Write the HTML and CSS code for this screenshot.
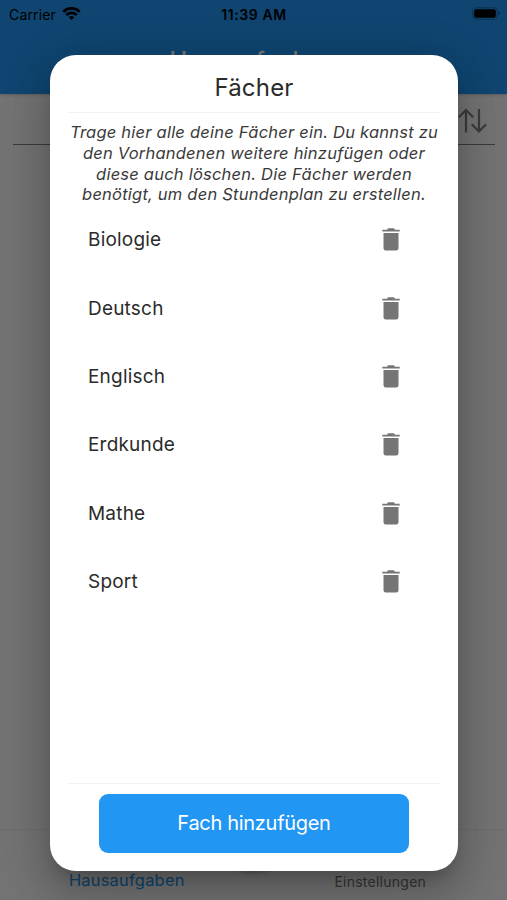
FILE: index.html
```html
<!DOCTYPE html>
<html lang="de">
<head>
<meta charset="utf-8">
<title>Hausaufgaben</title>
<link rel="stylesheet" href="styles.css">
</head>
<body>
<div class="screen">
  <header class="appbar">
    <div class="status">
      <div class="carrier">
        <span>Carrier</span>
        <svg width="19" height="14" viewBox="0 0 19 14" fill="none" stroke="#000" stroke-width="2.7"><path d="M1.3 4.7a11.6 11.6 0 0 1 16.4 0"/><path d="M4.2 8a7.5 7.5 0 0 1 10.6 0"/><path d="M9.5 13.1 6.7 10.3a4 4 0 0 1 5.6 0z" fill="#000" stroke="none"/></svg>
      </div>
      <span class="time">11:39 AM</span>
      <svg class="battery" width="28" height="14" viewBox="0 0 28 14"><rect x=".7" y=".8" width="24.6" height="11.5" rx="3.5" fill="none" stroke="#000" stroke-opacity=".3"/><rect x="2.2" y="2.3" width="21.6" height="8.5" rx="2" fill="#000"/><path d="M26.5 4.6q1.4.5 1.4 2t-1.4 2z" fill="#000" fill-opacity=".4"/></svg>
    </div>
    <h1 class="page-title">Hausaufgaben</h1>
  </header>
  <main class="content">
    <div class="filter">
      <svg width="29" height="26" viewBox="0 0 29 26" fill="none" stroke="#808080" stroke-width="2.2"><path d="M8 24.5V2M.8 9.2 8 2l7.2 7.2M21 1v22.5M13.8 16.3l7.2 7.2 7.2-7.2"/></svg>
    </div>
  </main>
  <nav class="tabs">
    <span class="tab tab-active">Hausaufgaben</span>
    <span class="tab">Einstellungen</span>
    <span class="fab"></span>
  </nav>
</div>
<div class="scrim">
  <section class="dialog">
    <h2 class="dialog-title">Fächer</h2>
    <p class="intro">Trage hier alle deine Fächer ein. Du kannst zu<br>den Vorhandenen weitere hinzufügen oder<br>diese auch löschen. Die Fächer werden<br>benötigt, um den Stundenplan zu erstellen.</p>
    <ul class="subjects">
      <li><span>Biologie</span><svg class="trash" viewBox="0 0 18 23"><path d="M.3 1.7h4.8L6 .3h6l.9 1.4h4.8v1.8H.3zM1.5 5h15v15.2a2.4 2.4 0 0 1-2.4 2.4H3.9a2.4 2.4 0 0 1-2.4-2.4z"/></svg></li>
      <li><span>Deutsch</span><svg class="trash" viewBox="0 0 18 23"><path d="M.3 1.7h4.8L6 .3h6l.9 1.4h4.8v1.8H.3zM1.5 5h15v15.2a2.4 2.4 0 0 1-2.4 2.4H3.9a2.4 2.4 0 0 1-2.4-2.4z"/></svg></li>
      <li><span>Englisch</span><svg class="trash" viewBox="0 0 18 23"><path d="M.3 1.7h4.8L6 .3h6l.9 1.4h4.8v1.8H.3zM1.5 5h15v15.2a2.4 2.4 0 0 1-2.4 2.4H3.9a2.4 2.4 0 0 1-2.4-2.4z"/></svg></li>
      <li><span>Erdkunde</span><svg class="trash" viewBox="0 0 18 23"><path d="M.3 1.7h4.8L6 .3h6l.9 1.4h4.8v1.8H.3zM1.5 5h15v15.2a2.4 2.4 0 0 1-2.4 2.4H3.9a2.4 2.4 0 0 1-2.4-2.4z"/></svg></li>
      <li><span>Mathe</span><svg class="trash" viewBox="0 0 18 23"><path d="M.3 1.7h4.8L6 .3h6l.9 1.4h4.8v1.8H.3zM1.5 5h15v15.2a2.4 2.4 0 0 1-2.4 2.4H3.9a2.4 2.4 0 0 1-2.4-2.4z"/></svg></li>
      <li><span>Sport</span><svg class="trash" viewBox="0 0 18 23"><path d="M.3 1.7h4.8L6 .3h6l.9 1.4h4.8v1.8H.3zM1.5 5h15v15.2a2.4 2.4 0 0 1-2.4 2.4H3.9a2.4 2.4 0 0 1-2.4-2.4z"/></svg></li>
    </ul>
    <div class="actions"><button class="add">Fach hinzufügen</button></div>
  </section>
</div>
</body>
</html>
```

FILE: styles.css
```css
* { box-sizing: border-box; }
body {
  margin: 0;
  font-family: Inter, "Liberation Sans", sans-serif;
  color: #2b2b2b;
}
.screen {
  width: 507px;
  height: 900px;
  display: flex;
  flex-direction: column;
  background: #fafafa;
  overflow: hidden;
}
.appbar {
  height: 94px;
  flex: none;
  background: #2196f3;
  box-shadow: 0 1px 3px rgba(0, 0, 0, .2);
}
.status {
  height: 28px;
  display: grid;
  grid-template-columns: 1fr auto 1fr;
  align-items: center;
  padding: 0 7px 0 9px;
  font-size: 14px;
  color: #000;
}
.carrier { display: flex; align-items: center; gap: 6px; letter-spacing: .15px; }
.time { font-weight: 600; font-size: 14px; letter-spacing: .6px; padding-right: 1px; }
.battery { justify-self: end; }
.page-title {
  margin: 17px 0 0;
  padding-right: 2px;
  text-align: center;
  font-size: 23.8px;
  line-height: 32px;
  font-weight: 500;
  color: #fff;
}
.content { flex: 1; }
.filter {
  height: 51px;
  margin: 0 12px 0 13px;
  padding: 14px 8.5px 0 0;
  display: flex;
  justify-content: flex-end;
  border-bottom: 1px solid #808080;
}
.tabs {
  position: relative;
  height: 71px;
  flex: none;
  display: flex;
  align-items: flex-end;
  padding-bottom: 8px;
  border-top: 1px solid #ededed;
}
.tab { flex: 1; text-align: center; font-size: 14px; letter-spacing: .25px; line-height: 20px; color: #757575; }
.tab-active { font-size: 16.4px; line-height: 23px; color: #2196f3; }
.fab {
  position: absolute;
  left: 50%;
  bottom: 32px;
  width: 66px;
  height: 66px;
  margin-left: -33px;
  border-radius: 50%;
  background: #2196f3;
  box-shadow: 0 4px 6px rgba(0, 0, 0, .3);
}
.scrim {
  position: absolute;
  top: 0;
  left: 0;
  width: 507px;
  height: 900px;
  padding: 55px 49px 30px 50px;
  background: rgba(0, 0, 0, .54);
  overflow: hidden;
}
.dialog {
  height: 815.5px;
  padding: 0 18px;
  display: flex;
  flex-direction: column;
  border-radius: 26px;
  background: #fff;
  box-shadow: 0 11px 15px -7px rgba(0, 0, 0, .2), 0 24px 38px 3px rgba(0, 0, 0, .14), 0 9px 46px 8px rgba(0, 0, 0, .12);
}
.dialog-title {
  margin: 0;
  height: 58px;
  padding-top: 16px;
  text-align: center;
  font-size: 24px;
  letter-spacing: .2px;
  line-height: 34px;
  font-weight: 400;
  border-bottom: 1px solid #f3f3f3;
}
.intro {
  margin: 9px -18px 0;
  text-align: center;
  font-size: 16.5px;
  letter-spacing: .22px;
  line-height: 20.8px;
  font-style: italic;
  white-space: nowrap;
  color: #3a3a3a;
}
.subjects { list-style: none; margin: 0; padding: 17.4px 40px 0 20px; flex: 1; }
.subjects li {
  height: 68.4px;
  padding-bottom: 34px;
  display: flex;
  align-items: center;
  justify-content: space-between;
  font-size: 19px;
  letter-spacing: .2px;
}
.trash { width: 18px; height: 23px; fill: #757575; }
.actions { height: 87.5px; padding: 10px 31px 0; border-top: 1px solid #f3f3f3; }
.add {
  display: block;
  width: 100%;
  height: 58.5px;
  padding: 0;
  border: 0;
  border-radius: 9px;
  background: #2196f3;
  color: #fff;
  font-family: inherit;
  font-size: 20px;
  letter-spacing: -.3px;
}
```
